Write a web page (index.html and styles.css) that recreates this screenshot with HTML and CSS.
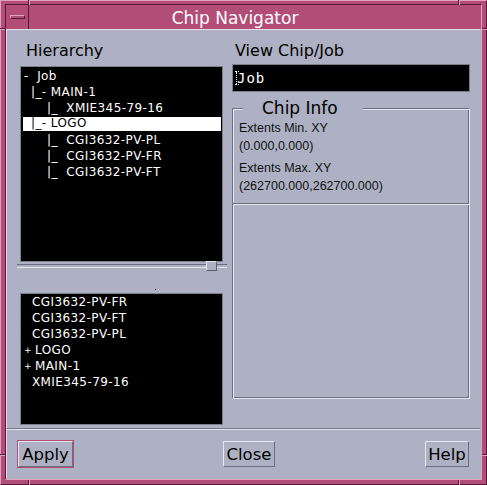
FILE: index.html
```html
<!DOCTYPE html>
<html lang="en">
  <head>
    <meta charset="UTF-8" />
    <title>Chip Navigator</title>
    <link rel="stylesheet" href="styles.css">
  </head>
  <body>
    <div class="window">
      <span class="notch v top l"></span>
      <span class="notch v top r"></span>
      <span class="notch v bottom l"></span>
      <span class="notch v bottom r"></span>
      <span class="notch h side-l t"></span>
      <span class="notch h side-l b"></span>
      <span class="notch h side-r t"></span>
      <span class="notch h side-r b"></span>

      <div class="frame">
        <div class="titlebar">
          <div class="menu-btn"><span class="dash"></span></div>
          <div class="title">Chip Navigator</div>
        </div>

        <div class="dialog">
          <div class="main">
            <div class="left">
              <div class="label">Hierarchy</div>
              <div class="list tree">
                <div class="row l0">-  Job</div>
                <div class="row l1">|_- MAIN-1</div>
                <div class="row l2">|_  XMIE345-79-16</div>
                <div class="row l1 sel">|_- LOGO</div>
                <div class="row l2">|_  CGI3632-PV-PL</div>
                <div class="row l2">|_  CGI3632-PV-FR</div>
                <div class="row l2">|_  CGI3632-PV-FT</div>
              </div>
              <div class="slider"><span class="thumb"></span></div>
              <div class="spacer"><span class="dot"></span></div>
              <div class="list cells">
                <div class="row">CGI3632-PV-FR</div>
                <div class="row">CGI3632-PV-FT</div>
                <div class="row">CGI3632-PV-PL</div>
                <div class="row exp"><span class="plus">+</span>LOGO</div>
                <div class="row exp"><span class="plus">+</span>MAIN-1</div>
                <div class="row">XMIE345-79-16</div>
              </div>
            </div>

            <div class="right">
              <div class="label">View Chip/Job</div>
              <div class="field"><span class="caret"></span>Job</div>
              <fieldset class="info">
                <legend>Chip Info</legend>
                <div class="info-text">
                  <p>Extents Min. XY</p>
                  <p>(0.000,0.000)</p>
                  <p class="next">Extents Max. XY</p>
                  <p>(262700.000,262700.000)</p>
                </div>
                <div class="info-panel"></div>
              </fieldset>
            </div>
          </div>

          <div class="sep"></div>

          <div class="buttons">
            <button class="btn default apply">Apply</button>
            <button class="btn close">Close</button>
            <button class="btn help">Help</button>
          </div>
        </div>
      </div>
    </div>
  </body>
</html>
```

FILE: styles.css
```css
:root {
  --pink: #b24d78;
  --pink-light: #e3a0bf;
  --pink-dark: #541838;
  --grey: #aeb1c3;
  --bevel-light: #e6e7ee;
  --bevel-dark: #6c6f80;
  --box-border: #7c7f8e;
}

* {
  box-sizing: border-box;
}

body {
  margin: 0;
  background: var(--grey);
  font-family: "DejaVu Sans", sans-serif;
  color: #000;
}

/* window manager frame */
.window {
  position: relative;
  width: 487px;
  height: 485px;
  background: var(--pink);
  border: 1px solid;
  border-color: var(--pink-light) var(--pink-dark) var(--pink-dark) var(--pink-light);
  padding: 3px 4px 4px;
}

.notch {
  position: absolute;
  background: var(--pink-dark);
}

.notch.v {
  width: 1px;
  height: 5px;
  box-shadow: 1px 0 0 var(--pink-light);
}

.notch.h {
  width: 5px;
  height: 1px;
  box-shadow: 0 1px 0 var(--pink-light);
}

.notch.top { top: -1px; }
.notch.bottom { bottom: -1px; }
.notch.v.l { left: 27px; }
.notch.v.r { left: 457px; }
.notch.side-l { left: -1px; }
.notch.side-r { right: -1px; }
.notch.h.t { top: 27px; }
.notch.h.b { top: 453px; }

.frame {
  height: 100%;
  border: 1px solid;
  border-color: var(--pink-dark) var(--pink-light) var(--pink-light) var(--pink-dark);
  display: flex;
  flex-direction: column;
}

.titlebar {
  height: 24px;
  flex-shrink: 0;
  display: flex;
}

.menu-btn {
  width: 23px;
  border-right: 1px solid var(--pink-dark);
  display: flex;
  align-items: center;
  justify-content: center;
}

.dash {
  width: 15px;
  height: 4px;
  border: 1px solid;
  border-color: var(--pink-light) var(--pink-dark) var(--pink-dark) var(--pink-light);
}

.title {
  flex: 1;
  color: #fff;
  font-size: 17px;
  line-height: 26px;
  text-align: center;
  padding-right: 40px;
  white-space: nowrap;
}

/* dialog body */
.dialog {
  flex: 1;
  display: flex;
  flex-direction: column;
  background: var(--grey);
  border: 1px solid;
  border-color: #e4dde6 var(--grey) var(--grey) #e4dde6;
}

.main {
  flex: 1;
  display: flex;
  gap: 5px;
  padding: 11px 10px 0;
}

.label {
  font-size: 16px;
  line-height: 20px;
  white-space: nowrap;
}

.left {
  width: 210px;
  display: flex;
  flex-direction: column;
}

.left .label {
  padding-left: 9px;
  margin-bottom: 5px;
}

.list {
  margin: 0 4px 0 3px;
  background: #000;
  border: 1px solid var(--box-border);
  color: #fff;
  font-size: 12px;
  overflow: hidden;
}

.list .row {
  height: 16px;
  line-height: 16px;
  white-space: pre;
  letter-spacing: 0.4px;
  margin: 0 1px 0 2px;
}

.tree {
  height: 196px;
  padding-top: 1px;
}

.tree .l0 { padding-left: 1px; }
.tree .l1 { padding-left: 8px; }
.tree .l2 { padding-left: 24px; }

.tree .row.sel {
  line-height: 15px;
  background: linear-gradient(#fff, #fff) 0 1px / 100% 14px no-repeat;
  color: #000;
}

.slider {
  position: relative;
  height: 10px;
  margin-top: -1px;
}

.slider::before {
  content: "";
  position: absolute;
  left: 0;
  right: 0;
  top: 3px;
  height: 2px;
  border-top: 1px solid var(--bevel-dark);
  border-bottom: 1px solid var(--bevel-light);
}

.thumb {
  position: absolute;
  left: 189px;
  top: 0;
  width: 11px;
  height: 10px;
  background: var(--grey);
  border: 1px solid;
  border-color: var(--bevel-light) #5c5f70 #5c5f70 var(--bevel-light);
}

.spacer {
  height: 22px;
  display: flex;
  align-items: flex-end;
  padding: 0 0 3px 138px;
}

.dot {
  width: 1px;
  height: 1px;
  background: #222;
}

.cells {
  height: 132px;
}

.cells .row { padding-left: 9px; }
.cells .row.exp { padding-left: 1px; }

.plus {
  display: inline-block;
  width: 11px;
  font-size: 9px;
  letter-spacing: 0;
  vertical-align: top;
}

/* right column */
.right {
  width: 238px;
  display: flex;
  flex-direction: column;
}

.right .label {
  padding-left: 3px;
  margin-bottom: 3px;
}

.field {
  position: relative;
  height: 28px;
  background: #000;
  border: 1px solid var(--box-border);
  color: #fff;
  font-family: "DejaVu Sans Mono", monospace;
  font-size: 14px;
  letter-spacing: 1px;
  line-height: 26px;
  padding-left: 4px;
}

.caret {
  position: absolute;
  left: 2px;
  top: 6px;
  width: 4px;
  height: 14px;
  border-top: 1px dotted #fff;
  border-bottom: 1px dotted #fff;
}

.caret::before {
  content: "";
  position: absolute;
  left: 1px;
  top: 0;
  bottom: 0;
  border-left: 1px dotted #fff;
}

.info {
  margin: 6px 0 0;
  padding: 0;
  min-width: 0;
  border: 1px solid;
  border-color: var(--bevel-dark) var(--bevel-light) var(--bevel-light) var(--bevel-dark);
  box-shadow: inset 1px 1px 0 var(--bevel-light), inset -1px -1px 0 var(--bevel-dark);
}

.info legend {
  margin-left: 10px;
  padding: 0 25px 0 19px;
  font-size: 17px;
  line-height: 20px;
  background: var(--grey);
}

.info-text {
  padding: 1px 0 0 6px;
  font-family: "Liberation Sans", Arial, sans-serif;
  font-size: 12.5px;
  line-height: 18px;
  color: #111;
}

.info-text p {
  margin: 0;
}

.info-text .next {
  margin-top: 4px;
}

.info-panel {
  margin-top: 8px;
  height: 195px;
  border-top: 1px solid var(--bevel-dark);
  box-shadow: inset 0 1px 0 var(--bevel-light);
}

/* bottom buttons */
.sep {
  height: 2px;
  border-top: 1px solid #74778a;
  border-bottom: 1px solid var(--bevel-light);
}

.buttons {
  height: 48px;
  flex-shrink: 0;
  display: flex;
  justify-content: space-between;
  align-items: center;
  padding: 0 11px;
}

.btn {
  height: 26px;
  padding: 0;
  background: var(--grey);
  border: 1px solid;
  border-color: var(--bevel-light) var(--bevel-dark) var(--bevel-dark) var(--bevel-light);
  font-family: "DejaVu Sans", sans-serif;
  font-size: 16.5px;
  line-height: 25px;
  color: #000;
  text-align: center;
}

.btn.default {
  outline: 1px solid var(--pink);
}

.apply { width: 55px; }
.close { width: 52px; }
.help { width: 44px; }
```
